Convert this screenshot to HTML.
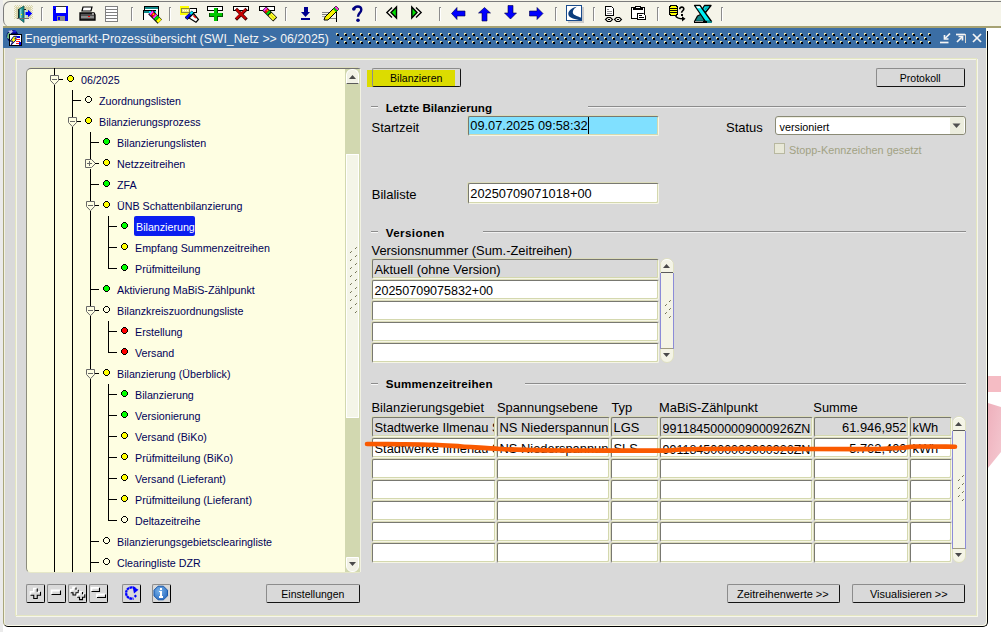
<!DOCTYPE html><html><head><meta charset="utf-8"><style>
html,body{margin:0;padding:0;}
body{width:1001px;height:632px;position:relative;overflow:hidden;background:#fff;font-family:"Liberation Sans", sans-serif;}
.t{position:absolute;white-space:nowrap;line-height:1;}
svg{position:absolute;overflow:visible;}
.fld{position:absolute;box-sizing:border-box;background:#fff;border-top:1px solid #787870;border-left:1px solid #787870;border-bottom:1px solid #f6f6e6;border-right:1px solid #f6f6e6;border-radius:2px;box-shadow:inset -1px -1px 0 #d4d8ae, -1px -1px 0 #dcdcbc;}
.btn{position:absolute;box-sizing:border-box;background:#d9d9d9;border-top:1px solid #8c8c8c;border-left:1px solid #8c8c8c;border-bottom:1px solid #141414;border-right:1px solid #141414;border-radius:2px;}
</style></head><body>
<div style="position:absolute;left:0px;top:0px;width:3px;height:632px;background:#ebebeb"></div>
<div style="position:absolute;left:3px;top:0px;width:998px;height:28px;background:#f5f4e9"></div>
<div style="position:absolute;left:3px;top:1px;width:1010px;height:26px;box-sizing:border-box;border:1px solid #7c7c7c;border-right:none;border-bottom:none;border-radius:7px 0 0 7px;background:#f5f4e9"></div>
<div style="position:absolute;left:3px;top:26px;width:998px;height:2px;background:#a6a273"></div>
<div style="position:absolute;left:41px;top:7px;width:1px;height:14px;background:#8c8c8c"></div>
<div style="position:absolute;left:42px;top:7px;width:1px;height:1px;background:#8c8c8c"></div>
<div style="position:absolute;left:42px;top:8px;width:1px;height:13px;background:#ffffff"></div>
<div style="position:absolute;left:131px;top:7px;width:1px;height:14px;background:#8c8c8c"></div>
<div style="position:absolute;left:132px;top:7px;width:1px;height:1px;background:#8c8c8c"></div>
<div style="position:absolute;left:132px;top:8px;width:1px;height:13px;background:#ffffff"></div>
<div style="position:absolute;left:169px;top:7px;width:1px;height:14px;background:#8c8c8c"></div>
<div style="position:absolute;left:170px;top:7px;width:1px;height:1px;background:#8c8c8c"></div>
<div style="position:absolute;left:170px;top:8px;width:1px;height:13px;background:#ffffff"></div>
<div style="position:absolute;left:285px;top:7px;width:1px;height:14px;background:#8c8c8c"></div>
<div style="position:absolute;left:286px;top:7px;width:1px;height:1px;background:#8c8c8c"></div>
<div style="position:absolute;left:286px;top:8px;width:1px;height:13px;background:#ffffff"></div>
<div style="position:absolute;left:375px;top:7px;width:1px;height:14px;background:#8c8c8c"></div>
<div style="position:absolute;left:376px;top:7px;width:1px;height:1px;background:#8c8c8c"></div>
<div style="position:absolute;left:376px;top:8px;width:1px;height:13px;background:#ffffff"></div>
<div style="position:absolute;left:439px;top:7px;width:1px;height:14px;background:#8c8c8c"></div>
<div style="position:absolute;left:440px;top:7px;width:1px;height:1px;background:#8c8c8c"></div>
<div style="position:absolute;left:440px;top:8px;width:1px;height:13px;background:#ffffff"></div>
<div style="position:absolute;left:555px;top:7px;width:1px;height:14px;background:#8c8c8c"></div>
<div style="position:absolute;left:556px;top:7px;width:1px;height:1px;background:#8c8c8c"></div>
<div style="position:absolute;left:556px;top:8px;width:1px;height:13px;background:#ffffff"></div>
<div style="position:absolute;left:593px;top:7px;width:1px;height:14px;background:#8c8c8c"></div>
<div style="position:absolute;left:594px;top:7px;width:1px;height:1px;background:#8c8c8c"></div>
<div style="position:absolute;left:594px;top:8px;width:1px;height:13px;background:#ffffff"></div>
<div style="position:absolute;left:657px;top:7px;width:1px;height:14px;background:#8c8c8c"></div>
<div style="position:absolute;left:658px;top:7px;width:1px;height:1px;background:#8c8c8c"></div>
<div style="position:absolute;left:658px;top:8px;width:1px;height:13px;background:#ffffff"></div>
<div style="position:absolute;left:721px;top:7px;width:1px;height:14px;background:#8c8c8c"></div>
<div style="position:absolute;left:722px;top:7px;width:1px;height:1px;background:#8c8c8c"></div>
<div style="position:absolute;left:722px;top:8px;width:1px;height:13px;background:#ffffff"></div>
<svg style="left:14px;top:5px;" width="20" height="19" viewBox="0 0 20 19" shape-rendering="crispEdges"><rect x="1" y="0" width="1" height="1" fill="#d9d5aa"/><rect x="3" y="0" width="1" height="1" fill="#d9d5aa"/><rect x="5" y="0" width="1" height="1" fill="#d9d5aa"/><rect x="7" y="0" width="1" height="1" fill="#d9d5aa"/><rect x="9" y="0" width="1" height="1" fill="#d9d5aa"/><rect x="11" y="0" width="1" height="1" fill="#d9d5aa"/><rect x="13" y="0" width="1" height="1" fill="#d9d5aa"/><rect x="15" y="0" width="1" height="1" fill="#d9d5aa"/><rect x="17" y="0" width="1" height="1" fill="#d9d5aa"/><rect x="0" y="1" width="1" height="1" fill="#d9d5aa"/><rect x="2" y="1" width="1" height="1" fill="#d9d5aa"/><rect x="4" y="1" width="1" height="1" fill="#d9d5aa"/><rect x="6" y="1" width="1" height="1" fill="#d9d5aa"/><rect x="8" y="1" width="1" height="1" fill="#d9d5aa"/><rect x="10" y="1" width="1" height="1" fill="#d9d5aa"/><rect x="12" y="1" width="1" height="1" fill="#d9d5aa"/><rect x="14" y="1" width="1" height="1" fill="#d9d5aa"/><rect x="16" y="1" width="1" height="1" fill="#d9d5aa"/><rect x="18" y="1" width="1" height="1" fill="#d9d5aa"/><rect x="1" y="2" width="1" height="1" fill="#d9d5aa"/><rect x="2" y="2" width="1" height="1" fill="#d9d5aa"/><rect x="3" y="2" width="1" height="1" fill="#d9d5aa"/><rect x="4" y="2" width="1" height="1" fill="#d9d5aa"/><rect x="5" y="2" width="1" height="1" fill="#d9d5aa"/><rect x="6" y="2" width="1" height="1" fill="#d9d5aa"/><rect x="7" y="2" width="1" height="1" fill="#d9d5aa"/><rect x="8" y="2" width="1" height="1" fill="#d9d5aa"/><rect x="9" y="2" width="1" height="1" fill="#d9d5aa"/><rect x="10" y="2" width="1" height="1" fill="#d9d5aa"/><rect x="11" y="2" width="1" height="1" fill="#d9d5aa"/><rect x="12" y="2" width="1" height="1" fill="#d9d5aa"/><rect x="13" y="2" width="1" height="1" fill="#d9d5aa"/><rect x="14" y="2" width="1" height="1" fill="#d9d5aa"/><rect x="15" y="2" width="1" height="1" fill="#d9d5aa"/><rect x="16" y="2" width="1" height="1" fill="#d9d5aa"/><rect x="17" y="2" width="1" height="1" fill="#d9d5aa"/><rect x="0" y="3" width="1" height="1" fill="#d9d5aa"/><rect x="2" y="3" width="1" height="1" fill="#d9d5aa"/><rect x="3" y="3" width="1" height="1" fill="#d9d5aa"/><rect x="4" y="3" width="1" height="1" fill="#d9d5aa"/><rect x="5" y="3" width="1" height="1" fill="#d9d5aa"/><rect x="6" y="3" width="1" height="1" fill="#d9d5aa"/><rect x="7" y="3" width="1" height="1" fill="#d9d5aa"/><rect x="8" y="3" width="1" height="1" fill="#d9d5aa"/><rect x="9" y="3" width="1" height="1" fill="#d9d5aa"/><rect x="10" y="3" width="1" height="1" fill="#d9d5aa"/><rect x="11" y="3" width="1" height="1" fill="#d9d5aa"/><rect x="12" y="3" width="1" height="1" fill="#d9d5aa"/><rect x="13" y="3" width="1" height="1" fill="#d9d5aa"/><rect x="14" y="3" width="1" height="1" fill="#d9d5aa"/><rect x="15" y="3" width="1" height="1" fill="#d9d5aa"/><rect x="16" y="3" width="1" height="1" fill="#d9d5aa"/><rect x="18" y="3" width="1" height="1" fill="#d9d5aa"/><rect x="1" y="4" width="1" height="1" fill="#d9d5aa"/><rect x="2" y="4" width="1" height="1" fill="#d9d5aa"/><rect x="3" y="4" width="1" height="1" fill="#d9d5aa"/><rect x="4" y="4" width="1" height="1" fill="#d9d5aa"/><rect x="5" y="4" width="1" height="1" fill="#d9d5aa"/><rect x="6" y="4" width="1" height="1" fill="#d9d5aa"/><rect x="7" y="4" width="1" height="1" fill="#d9d5aa"/><rect x="8" y="4" width="1" height="1" fill="#d9d5aa"/><rect x="9" y="4" width="1" height="1" fill="#d9d5aa"/><rect x="10" y="4" width="1" height="1" fill="#d9d5aa"/><rect x="11" y="4" width="1" height="1" fill="#d9d5aa"/><rect x="12" y="4" width="1" height="1" fill="#d9d5aa"/><rect x="13" y="4" width="1" height="1" fill="#d9d5aa"/><rect x="14" y="4" width="1" height="1" fill="#d9d5aa"/><rect x="15" y="4" width="1" height="1" fill="#d9d5aa"/><rect x="16" y="4" width="1" height="1" fill="#d9d5aa"/><rect x="17" y="4" width="1" height="1" fill="#d9d5aa"/><rect x="0" y="5" width="1" height="1" fill="#d9d5aa"/><rect x="2" y="5" width="1" height="1" fill="#d9d5aa"/><rect x="3" y="5" width="1" height="1" fill="#d9d5aa"/><rect x="4" y="5" width="1" height="1" fill="#d9d5aa"/><rect x="5" y="5" width="1" height="1" fill="#d9d5aa"/><rect x="6" y="5" width="1" height="1" fill="#d9d5aa"/><rect x="7" y="5" width="1" height="1" fill="#d9d5aa"/><rect x="8" y="5" width="1" height="1" fill="#d9d5aa"/><rect x="9" y="5" width="1" height="1" fill="#d9d5aa"/><rect x="10" y="5" width="1" height="1" fill="#d9d5aa"/><rect x="11" y="5" width="1" height="1" fill="#d9d5aa"/><rect x="12" y="5" width="1" height="1" fill="#d9d5aa"/><rect x="13" y="5" width="1" height="1" fill="#d9d5aa"/><rect x="14" y="5" width="1" height="1" fill="#d9d5aa"/><rect x="15" y="5" width="1" height="1" fill="#d9d5aa"/><rect x="16" y="5" width="1" height="1" fill="#d9d5aa"/><rect x="18" y="5" width="1" height="1" fill="#d9d5aa"/><rect x="1" y="6" width="1" height="1" fill="#d9d5aa"/><rect x="2" y="6" width="1" height="1" fill="#d9d5aa"/><rect x="3" y="6" width="1" height="1" fill="#d9d5aa"/><rect x="4" y="6" width="1" height="1" fill="#d9d5aa"/><rect x="5" y="6" width="1" height="1" fill="#d9d5aa"/><rect x="6" y="6" width="1" height="1" fill="#d9d5aa"/><rect x="7" y="6" width="1" height="1" fill="#d9d5aa"/><rect x="8" y="6" width="1" height="1" fill="#d9d5aa"/><rect x="9" y="6" width="1" height="1" fill="#d9d5aa"/><rect x="10" y="6" width="1" height="1" fill="#d9d5aa"/><rect x="11" y="6" width="1" height="1" fill="#d9d5aa"/><rect x="12" y="6" width="1" height="1" fill="#d9d5aa"/><rect x="13" y="6" width="1" height="1" fill="#d9d5aa"/><rect x="14" y="6" width="1" height="1" fill="#d9d5aa"/><rect x="15" y="6" width="1" height="1" fill="#d9d5aa"/><rect x="16" y="6" width="1" height="1" fill="#d9d5aa"/><rect x="17" y="6" width="1" height="1" fill="#d9d5aa"/><rect x="0" y="7" width="1" height="1" fill="#d9d5aa"/><rect x="2" y="7" width="1" height="1" fill="#d9d5aa"/><rect x="3" y="7" width="1" height="1" fill="#d9d5aa"/><rect x="4" y="7" width="1" height="1" fill="#d9d5aa"/><rect x="5" y="7" width="1" height="1" fill="#d9d5aa"/><rect x="6" y="7" width="1" height="1" fill="#d9d5aa"/><rect x="7" y="7" width="1" height="1" fill="#d9d5aa"/><rect x="8" y="7" width="1" height="1" fill="#d9d5aa"/><rect x="9" y="7" width="1" height="1" fill="#d9d5aa"/><rect x="10" y="7" width="1" height="1" fill="#d9d5aa"/><rect x="11" y="7" width="1" height="1" fill="#d9d5aa"/><rect x="12" y="7" width="1" height="1" fill="#d9d5aa"/><rect x="13" y="7" width="1" height="1" fill="#d9d5aa"/><rect x="14" y="7" width="1" height="1" fill="#d9d5aa"/><rect x="15" y="7" width="1" height="1" fill="#d9d5aa"/><rect x="16" y="7" width="1" height="1" fill="#d9d5aa"/><rect x="18" y="7" width="1" height="1" fill="#d9d5aa"/><rect x="1" y="8" width="1" height="1" fill="#d9d5aa"/><rect x="2" y="8" width="1" height="1" fill="#d9d5aa"/><rect x="3" y="8" width="1" height="1" fill="#d9d5aa"/><rect x="4" y="8" width="1" height="1" fill="#d9d5aa"/><rect x="5" y="8" width="1" height="1" fill="#d9d5aa"/><rect x="6" y="8" width="1" height="1" fill="#d9d5aa"/><rect x="7" y="8" width="1" height="1" fill="#d9d5aa"/><rect x="8" y="8" width="1" height="1" fill="#d9d5aa"/><rect x="9" y="8" width="1" height="1" fill="#d9d5aa"/><rect x="10" y="8" width="1" height="1" fill="#d9d5aa"/><rect x="11" y="8" width="1" height="1" fill="#d9d5aa"/><rect x="12" y="8" width="1" height="1" fill="#d9d5aa"/><rect x="13" y="8" width="1" height="1" fill="#d9d5aa"/><rect x="14" y="8" width="1" height="1" fill="#d9d5aa"/><rect x="15" y="8" width="1" height="1" fill="#d9d5aa"/><rect x="16" y="8" width="1" height="1" fill="#d9d5aa"/><rect x="17" y="8" width="1" height="1" fill="#d9d5aa"/><rect x="0" y="9" width="1" height="1" fill="#d9d5aa"/><rect x="2" y="9" width="1" height="1" fill="#d9d5aa"/><rect x="3" y="9" width="1" height="1" fill="#d9d5aa"/><rect x="4" y="9" width="1" height="1" fill="#d9d5aa"/><rect x="5" y="9" width="1" height="1" fill="#d9d5aa"/><rect x="6" y="9" width="1" height="1" fill="#d9d5aa"/><rect x="7" y="9" width="1" height="1" fill="#d9d5aa"/><rect x="8" y="9" width="1" height="1" fill="#d9d5aa"/><rect x="9" y="9" width="1" height="1" fill="#d9d5aa"/><rect x="10" y="9" width="1" height="1" fill="#d9d5aa"/><rect x="11" y="9" width="1" height="1" fill="#d9d5aa"/><rect x="12" y="9" width="1" height="1" fill="#d9d5aa"/><rect x="13" y="9" width="1" height="1" fill="#d9d5aa"/><rect x="14" y="9" width="1" height="1" fill="#d9d5aa"/><rect x="15" y="9" width="1" height="1" fill="#d9d5aa"/><rect x="16" y="9" width="1" height="1" fill="#d9d5aa"/><rect x="18" y="9" width="1" height="1" fill="#d9d5aa"/><rect x="1" y="10" width="1" height="1" fill="#d9d5aa"/><rect x="2" y="10" width="1" height="1" fill="#d9d5aa"/><rect x="3" y="10" width="1" height="1" fill="#d9d5aa"/><rect x="4" y="10" width="1" height="1" fill="#d9d5aa"/><rect x="5" y="10" width="1" height="1" fill="#d9d5aa"/><rect x="6" y="10" width="1" height="1" fill="#d9d5aa"/><rect x="7" y="10" width="1" height="1" fill="#d9d5aa"/><rect x="8" y="10" width="1" height="1" fill="#d9d5aa"/><rect x="9" y="10" width="1" height="1" fill="#d9d5aa"/><rect x="10" y="10" width="1" height="1" fill="#d9d5aa"/><rect x="11" y="10" width="1" height="1" fill="#d9d5aa"/><rect x="12" y="10" width="1" height="1" fill="#d9d5aa"/><rect x="13" y="10" width="1" height="1" fill="#d9d5aa"/><rect x="14" y="10" width="1" height="1" fill="#d9d5aa"/><rect x="15" y="10" width="1" height="1" fill="#d9d5aa"/><rect x="16" y="10" width="1" height="1" fill="#d9d5aa"/><rect x="17" y="10" width="1" height="1" fill="#d9d5aa"/><rect x="0" y="11" width="1" height="1" fill="#d9d5aa"/><rect x="2" y="11" width="1" height="1" fill="#d9d5aa"/><rect x="3" y="11" width="1" height="1" fill="#d9d5aa"/><rect x="4" y="11" width="1" height="1" fill="#d9d5aa"/><rect x="5" y="11" width="1" height="1" fill="#d9d5aa"/><rect x="6" y="11" width="1" height="1" fill="#d9d5aa"/><rect x="7" y="11" width="1" height="1" fill="#d9d5aa"/><rect x="8" y="11" width="1" height="1" fill="#d9d5aa"/><rect x="9" y="11" width="1" height="1" fill="#d9d5aa"/><rect x="10" y="11" width="1" height="1" fill="#d9d5aa"/><rect x="11" y="11" width="1" height="1" fill="#d9d5aa"/><rect x="12" y="11" width="1" height="1" fill="#d9d5aa"/><rect x="13" y="11" width="1" height="1" fill="#d9d5aa"/><rect x="14" y="11" width="1" height="1" fill="#d9d5aa"/><rect x="15" y="11" width="1" height="1" fill="#d9d5aa"/><rect x="16" y="11" width="1" height="1" fill="#d9d5aa"/><rect x="18" y="11" width="1" height="1" fill="#d9d5aa"/><rect x="1" y="12" width="1" height="1" fill="#d9d5aa"/><rect x="2" y="12" width="1" height="1" fill="#d9d5aa"/><rect x="3" y="12" width="1" height="1" fill="#d9d5aa"/><rect x="4" y="12" width="1" height="1" fill="#d9d5aa"/><rect x="5" y="12" width="1" height="1" fill="#d9d5aa"/><rect x="6" y="12" width="1" height="1" fill="#d9d5aa"/><rect x="7" y="12" width="1" height="1" fill="#d9d5aa"/><rect x="8" y="12" width="1" height="1" fill="#d9d5aa"/><rect x="9" y="12" width="1" height="1" fill="#d9d5aa"/><rect x="10" y="12" width="1" height="1" fill="#d9d5aa"/><rect x="11" y="12" width="1" height="1" fill="#d9d5aa"/><rect x="12" y="12" width="1" height="1" fill="#d9d5aa"/><rect x="13" y="12" width="1" height="1" fill="#d9d5aa"/><rect x="14" y="12" width="1" height="1" fill="#d9d5aa"/><rect x="15" y="12" width="1" height="1" fill="#d9d5aa"/><rect x="16" y="12" width="1" height="1" fill="#d9d5aa"/><rect x="17" y="12" width="1" height="1" fill="#d9d5aa"/><rect x="0" y="13" width="1" height="1" fill="#d9d5aa"/><rect x="2" y="13" width="1" height="1" fill="#d9d5aa"/><rect x="4" y="13" width="1" height="1" fill="#d9d5aa"/><rect x="6" y="13" width="1" height="1" fill="#d9d5aa"/><rect x="8" y="13" width="1" height="1" fill="#d9d5aa"/><rect x="10" y="13" width="1" height="1" fill="#d9d5aa"/><rect x="12" y="13" width="1" height="1" fill="#d9d5aa"/><rect x="14" y="13" width="1" height="1" fill="#d9d5aa"/><rect x="16" y="13" width="1" height="1" fill="#d9d5aa"/><rect x="18" y="13" width="1" height="1" fill="#d9d5aa"/><rect x="4" y="4" width="1.2" height="9.5" fill="#202020"/><rect x="4" y="4" width="8" height="1.2" fill="#202020"/><rect x="11" y="4" width="1.2" height="9.5" fill="#202020"/><rect x="10.5" y="5" width="1" height="8" fill="#a8f4f4"/><g shape-rendering="auto"><polygon points="5,4 10,1 10,17.5 5,13.5" fill="#189090" stroke="#0c4848" stroke-width="0.7"/><polygon points="6,4.5 7.5,3.5 7.5,14.5 6,13.2" fill="#88d0d0"/><polygon points="11.5,7 14,7 14,4.8 18.2,8.5 14,12.2 14,10 11.5,10" fill="#0000ff"/></g><rect x="7" y="9" width="1" height="1" fill="#ffff00"/><rect x="3" y="13" width="12" height="1" fill="#707070"/></svg>
<svg style="left:53px;top:6px;" width="16" height="16" viewBox="0 0 16 16" shape-rendering="crispEdges"><rect x="0" y="0" width="15" height="15" fill="#0000ff"/><rect x="3" y="1" width="10" height="5.5" fill="#fff"/>
<rect x="3" y="0" width="10" height="1" fill="#303030"/><rect x="4" y="10" width="8" height="5" fill="#8c8c8c"/><rect x="5" y="11" width="2" height="3" fill="#0000ff"/><rect x="1" y="3" width="1" height="1" fill="#000"/></svg>
<svg style="left:79px;top:6px;" width="17" height="16" viewBox="0 0 17 16" shape-rendering="crispEdges"><polygon points="4,1 13,1 12,5 3,5" fill="#fff" stroke="#000" stroke-width="1.2" shape-rendering="auto"/>
<rect x="5" y="2.5" width="6" height="0.8" fill="#808080"/>
<path d="M1 7 h14 l1 2 v5 h-15 v-5z" fill="#505050" stroke="#000" stroke-width="1.3" shape-rendering="auto"/>
<rect x="2" y="9.5" width="13" height="2" fill="#8c8c8c"/><rect x="9" y="9.5" width="2" height="1.2" fill="#ff0000"/><rect x="13" y="7" width="2" height="2" fill="#9a9a9a"/></svg>
<svg style="left:105px;top:6px;" width="14" height="16" viewBox="0 0 14 16" shape-rendering="crispEdges"><rect x="0.5" y="0.5" width="12" height="15" fill="#fff" stroke="#808080" stroke-width="1"/>
<rect x="1" y="3.3" width="12" height="1" fill="#808080"/><rect x="1" y="6.3" width="12" height="1" fill="#808080"/><rect x="1" y="9.3" width="12" height="1" fill="#808080"/><rect x="1" y="12.3" width="12" height="1" fill="#808080"/></svg>
<svg style="left:140px;top:3px;" width="24" height="24" viewBox="0 0 24 24" shape-rendering="crispEdges"><rect x="4" y="3" width="15" height="1" fill="#000"/><rect x="5" y="4" width="13" height="1.6" fill="#108888"/><rect x="4" y="3" width="1" height="5" fill="#000"/><rect x="18" y="4" width="1.2" height="9" fill="#000"/><rect x="5" y="5.6" width="13" height="2" fill="#fff"/><rect x="3" y="7" width="13" height="1" fill="#000"/><rect x="4" y="8" width="12" height="1.5" fill="#108888"/><rect x="3" y="7" width="1" height="10" fill="#000"/><rect x="4" y="9.5" width="12" height="7" fill="#fff"/><g transform="translate(10.3 9.2) rotate(45)" shape-rendering="auto"><rect x="0" y="-3" width="13.5" height="6" fill="#000"/><rect x="0.3" y="-2.6" width="2.2" height="4.6" fill="#ff30ff"/><rect x="2.5" y="-2.6" width="2.8" height="4.6" fill="#e00000"/><rect x="3" y="-1.5" width="1.5" height="1.5" fill="#ffd000"/><rect x="5.3" y="-2.6" width="1.8" height="4.6" fill="#ff30ff"/><rect x="7.1" y="-2.6" width="2.8" height="4.6" fill="#00e000"/><rect x="10.2" y="-2.6" width="3" height="4.6" fill="#ffff00"/></g><rect x="9" y="8" width="1.5" height="1.5" fill="#00e0ff"/><rect x="14.5" y="8" width="1.5" height="1.5" fill="#00e0ff"/></svg>
<svg style="left:177px;top:3px;" width="24" height="24" viewBox="0 0 24 24" shape-rendering="crispEdges"><polygon points="3,3 12,3 12,9 9,12 9,12 3,12" fill="#ffff00"/><rect x="4.5" y="5.5" width="15" height="4" fill="#fff" stroke="#000" stroke-width="1.1"/><rect x="4.5" y="5.5" width="8" height="4" fill="#f4f080" stroke="#8c8a40" stroke-width="1"/><rect x="6" y="7" width="1" height="1" fill="#fff"/><rect x="8" y="7" width="1" height="1" fill="#fff"/><rect x="10" y="7" width="1" height="1" fill="#fff"/><g shape-rendering="auto"><polygon points="8,14.5 14.8,8 17,10.3 10.5,16.5" fill="#0000ff" stroke="#000" stroke-width="0.8"/><polygon points="12.5,10.2 14.8,8 17,10.3 14.8,12.5" fill="#00e8f0"/><polygon points="12,15 16.5,10.5 21.5,16.5 19,19.2" fill="#fff" stroke="#000" stroke-width="1.2"/><line x1="16.3" y1="12.5" x2="18.8" y2="15.2" stroke="#ff0000" stroke-width="1.2"/></g></svg>
<svg style="left:207px;top:6px;" width="17" height="15" viewBox="0 0 17 15" shape-rendering="crispEdges"><rect x="0.5" y="0.5" width="15" height="4" fill="#fff" stroke="#000" stroke-width="1"/>
<path d="M7 2 h4 v5 h5 v3.5 h-5 v4.5 h-4 v-4.5 h-5 v-3.5 h5z" fill="#005000"/><path d="M6.5 2 h3 v5 h5 v3 h-5 v4.5 h-3 v-4.5 h-4 v-3 h4z" fill="#00c800"/></svg>
<svg style="left:233px;top:6px;" width="17" height="15" viewBox="0 0 17 15" shape-rendering="crispEdges"><rect x="0.5" y="0.5" width="15" height="4" fill="#fff" stroke="#000" stroke-width="1"/>
<g stroke="#3a0000" stroke-width="3.2" stroke-linecap="square" shape-rendering="auto"><line x1="4" y1="4" x2="12.5" y2="12.5"/><line x1="12.5" y1="4" x2="4" y2="12.5"/></g>
<g stroke="#c80000" stroke-width="2.2" stroke-linecap="square" shape-rendering="auto"><line x1="4" y1="4" x2="12" y2="12"/><line x1="12" y1="4" x2="4" y2="12"/></g></svg>
<svg style="left:259px;top:6px;" width="20" height="18" viewBox="0 0 20 18" shape-rendering="crispEdges"><rect x="0.5" y="0.5" width="15" height="4" fill="#fff" stroke="#000" stroke-width="1"/><g transform="translate(5.2 2.6) rotate(45)" shape-rendering="auto"><rect x="0" y="-2.8" width="15.5" height="5.6" fill="#000"/><rect x="0.4" y="-2.3" width="2" height="4.4" fill="#ff30ff"/><rect x="2.4" y="-2.3" width="2.4" height="4.4" fill="#ee1010"/><rect x="3" y="-1.5" width="1" height="1.2" fill="#ffd000"/><rect x="4.8" y="-2.3" width="2.2" height="4.4" fill="#00d800"/><rect x="8" y="-2.3" width="6.6" height="4.4" fill="#ffff30"/><rect x="8" y="-0.6" width="6.6" height="1" fill="#d8d800"/></g></svg>
<svg style="left:301px;top:7px;" width="9" height="13" viewBox="0 0 9 13" shape-rendering="crispEdges"><rect x="2.5" y="0" width="4" height="5" fill="#000090"/><polygon points="0,5 9,5 4.5,10" fill="#000090" shape-rendering="auto"/><rect x="0" y="11" width="9" height="1.5" fill="#000090"/></svg>
<svg style="left:322px;top:5px;" width="19" height="18" viewBox="0 0 19 18" shape-rendering="crispEdges"><rect x="0" y="7" width="9" height="1" fill="#808080"/><rect x="0" y="9" width="8" height="1" fill="#808080"/><rect x="0" y="11" width="7" height="1" fill="#a0a0a0"/><rect x="4" y="13" width="10" height="1" fill="#808080"/>
<rect x="14" y="7" width="1" height="10" fill="#000"/>
<polygon points="2,15 3,12 13,2 16,5 6,15" fill="#f4f000" stroke="#000" stroke-width="1" shape-rendering="auto"/>
<polygon points="12,3 14,1 17,4 15,6" fill="#ff30e0" stroke="#000" stroke-width="0.6" shape-rendering="auto"/><polygon points="11,4 12.5,2.5 15.5,5.5 14,7" fill="#00c000" shape-rendering="auto"/></svg>
<svg style="left:350px;top:4px;" width="14" height="20" viewBox="0 0 14 20" shape-rendering="crispEdges"><g shape-rendering="auto"><path d="M4 5.2 C 4.5 1.8, 11.5 1.2, 11.3 5.8 C 11.2 9, 8 9, 8 12.8" fill="none" stroke="#000080" stroke-width="2.4"/><circle cx="3.8" cy="5" r="1.8" fill="#000080"/><circle cx="8" cy="16.2" r="1.8" fill="#000080"/></g></svg>
<svg style="left:386px;top:7px;" width="12" height="12" viewBox="0 0 12 12" shape-rendering="crispEdges"><polyline points="6,0.5 0.8,5.5 6,10.5" fill="none" stroke="#000" stroke-width="1.3" shape-rendering="auto"/><polygon points="10.5,0 10.5,11 5,5.5" fill="#00e000" stroke="#000" stroke-width="1.4" shape-rendering="auto"/></svg>
<svg style="left:411px;top:7px;" width="12" height="12" viewBox="0 0 12 12" shape-rendering="crispEdges"><polyline points="5,0.5 10.2,5.5 5,10.5" fill="none" stroke="#000" stroke-width="1.3" shape-rendering="auto"/><polygon points="0.8,0 0.8,11 6,5.5" fill="#00e000" stroke="#000" stroke-width="1.4" shape-rendering="auto"/></svg>
<svg style="left:451px;top:7px;" width="15" height="14" viewBox="0 0 15 14" shape-rendering="crispEdges"><polygon points="0.5,6.5 6,0.5 6,4 14,4 14,9 6,9 6,12.5" fill="#0000ff" stroke="#000040" stroke-width="0.6" shape-rendering="auto"/></svg>
<svg style="left:478px;top:7px;" width="14" height="15" viewBox="0 0 14 15" shape-rendering="crispEdges"><polygon points="6.5,0.5 12.5,6 9,6 9,14 4,14 4,6 0.5,6" fill="#0000ff" stroke="#000040" stroke-width="0.6" shape-rendering="auto"/></svg>
<svg style="left:504px;top:5px;" width="14" height="15" viewBox="0 0 14 15" shape-rendering="crispEdges"><polygon points="6.5,14 12.5,8 9,8 9,0.5 4,0.5 4,8 0.5,8" fill="#0000ff" stroke="#000040" stroke-width="0.6" shape-rendering="auto"/></svg>
<svg style="left:529px;top:7px;" width="15" height="14" viewBox="0 0 15 14" shape-rendering="crispEdges"><polygon points="14,6.5 8,0.5 8,4 0.5,4 0.5,9 8,9 8,12.5" fill="#0000ff" stroke="#000040" stroke-width="0.6" shape-rendering="auto"/></svg>
<svg style="left:566px;top:5px;" width="18" height="18" viewBox="0 0 18 18" shape-rendering="crispEdges"><rect x="1.5" y="1.5" width="16" height="16" fill="#cacaca"/><rect x="0.5" y="0.5" width="15" height="15" fill="#fff" stroke="#1a4c8c" stroke-width="1.2"/><path d="M10.8 1.8 C 5 3, 1.5 6.5, 2.5 10 C 3.5 13.5, 9 13.8, 15.5 15.5 L 15.5 12.8 C 11 11, 6.5 10, 6.8 7 C 7 4.5, 9 3, 10.8 1.8 Z" fill="#0a3c7c" shape-rendering="auto"/></svg>
<svg style="left:604px;top:5px;" width="20" height="18" viewBox="0 0 20 18" shape-rendering="crispEdges"><path d="M1.5 1.5 H7.5 L9.5 3.5 V10.5 H1.5 Z" fill="#fff" stroke="#000" stroke-width="1" shape-rendering="auto"/><rect x="1" y="1" width="1" height="10" fill="#000"/><rect x="1" y="10" width="9" height="1" fill="#000"/><rect x="3" y="4" width="2" height="1" fill="#909090"/><rect x="3" y="6" width="5" height="1" fill="#909090"/><rect x="3" y="8" width="5" height="1" fill="#909090"/><g fill="none" stroke="#000" stroke-width="1.1" shape-rendering="auto"><path d="M1.5 14.5 L3.5 12.5 H6.5 L8.5 14.5 L6.5 16.5 H3.5z"/><path d="M10.5 14.5 L12.5 12.5 H15.5 L17.5 14.5 L15.5 16.5 H12.5z"/></g><rect x="4" y="14" width="2" height="1" fill="#000"/><rect x="13" y="14" width="2" height="1" fill="#000"/></svg>
<svg style="left:630px;top:5px;" width="17" height="16" viewBox="0 0 17 16" shape-rendering="crispEdges"><rect x="1" y="2" width="14" height="12" fill="#000"/><rect x="2" y="3" width="12" height="10" fill="#fff"/><rect x="5" y="1" width="6" height="1" fill="#000"/><rect x="4" y="2" width="1" height="1" fill="#000"/><rect x="11" y="2" width="1" height="1" fill="#000"/><rect x="3" y="3" width="10" height="2" fill="#000"/><rect x="6" y="2" width="4" height="1" fill="#fff"/><path d="M7.5 8.5 H13.5 L15.5 10.5 V14.5 H7.5 Z" fill="#fff" stroke="#000" stroke-width="1" shape-rendering="auto"/><rect x="7" y="8" width="1" height="7" fill="#000"/><rect x="7" y="14" width="9" height="1" fill="#000"/><rect x="9" y="10" width="3" height="1" fill="#000"/><rect x="9" y="12" width="5" height="1" fill="#000"/></svg>
<svg style="left:664px;top:2px;" width="50" height="24" viewBox="0 0 50 24" shape-rendering="crispEdges"><rect x="5" y="4" width="9" height="9" fill="#000"/><rect x="6" y="3" width="7" height="11" fill="#000"/><rect x="6" y="5" width="7" height="7" fill="#ffff00"/><rect x="7" y="4" width="5" height="9" fill="#ffff00"/><rect x="6" y="6" width="7" height="1" fill="#000"/><rect x="6" y="8" width="7" height="1" fill="#000"/><rect x="6" y="10" width="7" height="1" fill="#000"/><g shape-rendering="auto"><path d="M15.8 7.2 C 15.6 4.6, 20 4.4, 19.8 7 C 19.7 8.8, 17.6 8.8, 17.6 10.8" fill="none" stroke="#000" stroke-width="1.6"/><path d="M11.5 13.5 C 12.5 16, 14 16.8, 19 16.8" fill="none" stroke="#000" stroke-width="1.4"/><polygon points="18,14.2 21.5,16.8 18,19.4" fill="#000"/></g><rect x="16.5" y="12" width="2" height="2" fill="#000"/><g shape-rendering="auto" stroke-linejoin="round"><polygon points="30.5,19.5 33.5,14 37.5,12 41,19.5" fill="#108888" stroke="#000" stroke-width="1.3"/><polygon points="40.5,3.5 47,3.5 41.5,10.5 37.5,8.5" fill="#00e0e8" stroke="#000" stroke-width="1.3"/><polygon points="41.5,6 44,5 40.5,9" fill="#108888"/><polygon points="30.5,3.5 36,3.5 47.5,19.5 41.5,19.5" fill="#00f0f8" stroke="#000" stroke-width="1.3"/><polygon points="32,4.3 35.5,4.3 37,6.3 33.5,6.3" fill="#fff"/><polygon points="42,19 47.5,19 48,21 42,21" fill="#108888"/></g><rect x="30" y="19" width="13" height="2" fill="#000"/><rect x="31" y="19" width="8" height="1" fill="#909090"/></svg>
<svg style="left:988px;top:360px" width="13" height="120"><defs><linearGradient id="pg" x1="0" y1="0" x2="1" y2="1"><stop offset="0" stop-color="#eeb0bc"/><stop offset="1" stop-color="#f4c8d0"/></linearGradient></defs><rect x="0" y="16" width="13" height="16" fill="#f5bcc4"/><polygon points="0,43 13,47 13,92 0,108" fill="url(#pg)"/></svg>
<div style="position:absolute;left:3px;top:28px;width:985px;height:599px;box-sizing:border-box;background:#d9d9d9;border-left:1px solid #a8a67c;border-right:1px solid #000;border-bottom:1px solid #000;border-radius:0 0 5px 5px;box-shadow:inset -1px -1px 0 #fafae8, inset 1px 0 0 #f2f2e0"></div>
<div style="position:absolute;left:987px;top:28px;width:1px;height:3px;background:#fff"></div>
<div style="position:absolute;left:3px;top:28px;width:983px;height:20px;background:#3b6ea5"></div>
<svg style="left:3px;top:28px;" width="24" height="20" viewBox="0 0 24 20" shape-rendering="crispEdges"><g shape-rendering="auto"><circle cx="9.5" cy="8" r="6" fill="#000070"/><polygon points="4.5,6 7,3.5 8.5,4 6,11 4,10" fill="#70c080"/><polygon points="5,3 9,2 10,4 7.5,5.5" fill="#c8c0f0"/><rect x="10" y="2.5" width="3" height="2" fill="#2020e0"/></g><rect x="6.7" y="6.7" width="11.8" height="10.8" fill="#fff" stroke="#000" stroke-width="1.5"/><g shape-rendering="auto"><polygon points="10.8,8.3 14,8.3 11.8,11 14,11 8,17.2 9.8,13.2 7.2,13.2" fill="#ffff00" stroke="#000080" stroke-width="1"/></g><rect x="14" y="8" width="3.2" height="1.9" fill="#0000e0"/><rect x="13" y="11" width="4" height="1" fill="#ff2020"/><rect x="13" y="13.2" width="3.5" height="1" fill="#ff2020"/><rect x="12.5" y="15" width="3" height="1" fill="#ff2020"/><rect x="15.5" y="14.2" width="2.5" height="2.8" fill="#0000e0"/></svg>
<div class="t" style="left:24.6px;top:32.99px;font-size:12.3px;color:#f4f4f4;font-weight:400;">Energiemarkt-Prozessübersicht (SWI_Netz &gt;&gt; 06/2025)</div>
<svg style="left:336px;top:33px" width="595" height="12"><defs><pattern id="dp" x="0" y="0" width="8" height="8" patternUnits="userSpaceOnUse">
<rect x="0" y="0" width="2" height="2" fill="#e6e2b4"/><rect x="1" y="1" width="2" height="2" fill="#000"/>
<rect x="4" y="4" width="2" height="2" fill="#e6e2b4"/><rect x="5" y="5" width="2" height="2" fill="#000"/>
</pattern></defs><rect x="0" y="0" width="595" height="11" fill="url(#dp)"/></svg>
<svg style="left:925px;top:28px;" width="65" height="20" viewBox="0 0 65 20" shape-rendering="crispEdges"><g stroke="#f4f4f4" stroke-width="1.7" fill="none" shape-rendering="auto">
<line x1="15" y1="14.5" x2="23.5" y2="14.5"/><line x1="25" y1="5.5" x2="20" y2="10.5"/><polyline points="19.5,7 19.5,11 23.5,11"/>
<polyline points="31,6.5 40,6.5"/><line x1="32" y1="14" x2="37.5" y2="8.5"/><polyline points="33.5,8.5 37.5,8.5 37.5,12.5"/>
<line x1="48" y1="6" x2="56" y2="14"/><line x1="56" y1="6" x2="48" y2="14"/></g>
<line x1="40.5" y1="5.7" x2="40.5" y2="15" stroke="#dcd6cc" stroke-width="1.6"/></svg>
<div style="position:absolute;left:15px;top:58px;width:962px;height:558px;box-sizing:border-box;border:1px solid #e4e6c2;box-shadow:inset 1px 1px 0 #f6f6ea, 1px 1px 0 #f6f6ea;"></div>
<div style="position:absolute;left:26px;top:68px;width:335px;height:505px;box-sizing:border-box;background:#fefee2;border-top:1px solid #707070;border-left:1px solid #8c8c7c;border-bottom:1px solid #e6e8c8;border-radius:5px 3px 3px 5px;overflow:hidden"></div>
<div style="position:absolute;left:30px;top:67px;width:328px;height:1px;background:#dcdcbc"></div>
<div style="position:absolute;left:345px;top:69px;width:15px;height:503px;background:#d2d8b0"></div>
<div style="position:absolute;left:360px;top:69px;width:1px;height:503px;background:#f2f2e2"></div>
<div style="position:absolute;left:356px;top:68px;width:2px;height:1px;background:#707070"></div>
<div style="position:absolute;left:346px;top:69px;width:13px;height:15px;box-sizing:border-box;background:#f2f2e6;border:1px solid #fff;border-bottom:1px solid #5a5a5a;border-radius:6px 6px 0 0"></div>
<svg style="left:349px;top:75px;" width="8" height="5" viewBox="0 0 8 5" shape-rendering="crispEdges"><polygon points="0,4 3.5,0 7,4" fill="#4a4a4a" shape-rendering="auto"/></svg>
<div style="position:absolute;left:346px;top:154px;width:13px;height:264px;box-sizing:border-box;background:#f4f5e8;border:1px solid #fff;"></div>
<svg style="left:346px;top:242px;" width="13" height="80" viewBox="0 0 13 80" shape-rendering="crispEdges"><rect x="10" y="5" width="1" height="1" fill="#8c8c6c"/><rect x="9" y="6" width="1" height="1" fill="#6c6c50"/><rect x="10" y="13" width="1" height="1" fill="#8c8c6c"/><rect x="9" y="14" width="1" height="1" fill="#6c6c50"/><rect x="10" y="21" width="1" height="1" fill="#8c8c6c"/><rect x="9" y="22" width="1" height="1" fill="#6c6c50"/><rect x="10" y="29" width="1" height="1" fill="#8c8c6c"/><rect x="9" y="30" width="1" height="1" fill="#6c6c50"/><rect x="10" y="37" width="1" height="1" fill="#8c8c6c"/><rect x="9" y="38" width="1" height="1" fill="#6c6c50"/><rect x="10" y="45" width="1" height="1" fill="#8c8c6c"/><rect x="9" y="46" width="1" height="1" fill="#6c6c50"/><rect x="10" y="53" width="1" height="1" fill="#8c8c6c"/><rect x="9" y="54" width="1" height="1" fill="#6c6c50"/><rect x="10" y="61" width="1" height="1" fill="#8c8c6c"/><rect x="9" y="62" width="1" height="1" fill="#6c6c50"/><rect x="10" y="69" width="1" height="1" fill="#8c8c6c"/><rect x="9" y="70" width="1" height="1" fill="#6c6c50"/><rect x="5" y="9" width="1" height="1" fill="#8c8c6c"/><rect x="4" y="10" width="1" height="1" fill="#6c6c50"/><rect x="5" y="17" width="1" height="1" fill="#8c8c6c"/><rect x="4" y="18" width="1" height="1" fill="#6c6c50"/><rect x="5" y="25" width="1" height="1" fill="#8c8c6c"/><rect x="4" y="26" width="1" height="1" fill="#6c6c50"/><rect x="5" y="33" width="1" height="1" fill="#8c8c6c"/><rect x="4" y="34" width="1" height="1" fill="#6c6c50"/><rect x="5" y="41" width="1" height="1" fill="#8c8c6c"/><rect x="4" y="42" width="1" height="1" fill="#6c6c50"/><rect x="5" y="49" width="1" height="1" fill="#8c8c6c"/><rect x="4" y="50" width="1" height="1" fill="#6c6c50"/><rect x="5" y="57" width="1" height="1" fill="#8c8c6c"/><rect x="4" y="58" width="1" height="1" fill="#6c6c50"/><rect x="5" y="65" width="1" height="1" fill="#8c8c6c"/><rect x="4" y="66" width="1" height="1" fill="#6c6c50"/></svg>
<div style="position:absolute;left:346px;top:557px;width:13px;height:15px;box-sizing:border-box;background:#f2f2e6;border:1px solid #fff;border-radius:0 0 6px 6px"></div>
<svg style="left:349px;top:562px;" width="8" height="5" viewBox="0 0 8 5" shape-rendering="crispEdges"><polygon points="0,0 3.5,4 7,0" fill="#4a4a4a" shape-rendering="auto"/></svg>
<svg style="left:0px;top:0px;" width="400" height="632" viewBox="0 0 400 632" shape-rendering="crispEdges"><rect x="54" y="68" width="1" height="8" fill="#000"/><rect x="54" y="85" width="1" height="487" fill="#000"/><rect x="72" y="90" width="1" height="482" fill="#000"/><rect x="90" y="132" width="1" height="440" fill="#000"/><rect x="108" y="216" width="1" height="53" fill="#000"/><rect x="108" y="321" width="1" height="32" fill="#000"/><rect x="108" y="384" width="1" height="137" fill="#000"/><rect x="54" y="75" width="1" height="10" fill="#fefee2"/><path d="M50.5 75.5 H58.5 V80.5 L54.5 84.7 L50.5 80.5 Z" fill="#fefee2" stroke="#686868" stroke-width="1" shape-rendering="auto"/><rect x="52" y="79" width="5" height="1" fill="#686868"/><rect x="59" y="79" width="4" height="1" fill="#000"/><path d="M69 75h3v1h1v1h1v3h-1v1h-1v1h-3v-1h-1v-1h-1v-3h1v-1h1z" fill="#000"/><path d="M69 76h3v1h1v3h-1v1h-3v-1h-1v-3h1z" fill="#ffff00"/><rect x="72" y="100" width="9" height="1" fill="#000"/><path d="M87 96h3v1h1v1h1v3h-1v1h-1v1h-3v-1h-1v-1h-1v-3h1v-1h1z" fill="#000"/><path d="M87 97h3v1h1v3h-1v1h-3v-1h-1v-3h1z" fill="#fefee2"/><rect x="72" y="117" width="1" height="10" fill="#fefee2"/><path d="M68.5 117.5 H76.5 V122.5 L72.5 126.7 L68.5 122.5 Z" fill="#fefee2" stroke="#686868" stroke-width="1" shape-rendering="auto"/><rect x="70" y="121" width="5" height="1" fill="#686868"/><rect x="77" y="121" width="4" height="1" fill="#000"/><path d="M87 117h3v1h1v1h1v3h-1v1h-1v1h-3v-1h-1v-1h-1v-3h1v-1h1z" fill="#000"/><path d="M87 118h3v1h1v3h-1v1h-3v-1h-1v-3h1z" fill="#ffff00"/><rect x="90" y="142" width="9" height="1" fill="#000"/><path d="M105 138h3v1h1v1h1v3h-1v1h-1v1h-3v-1h-1v-1h-1v-3h1v-1h1z" fill="#000"/><path d="M105 139h3v1h1v3h-1v1h-3v-1h-1v-3h1z" fill="#00ff00"/><rect x="90" y="159" width="1" height="10" fill="#fefee2"/><path d="M85.5 159.5 H91.5 L95.5 163.5 L91.5 167.5 H85.5 Z" fill="#fefee2" stroke="#686868" stroke-width="1" shape-rendering="auto"/><rect x="87" y="163" width="5" height="1" fill="#686868"/><rect x="89" y="161" width="1" height="5" fill="#686868"/><rect x="95" y="163" width="4" height="1" fill="#000"/><path d="M105 159h3v1h1v1h1v3h-1v1h-1v1h-3v-1h-1v-1h-1v-3h1v-1h1z" fill="#000"/><path d="M105 160h3v1h1v3h-1v1h-3v-1h-1v-3h1z" fill="#ffff00"/><rect x="90" y="184" width="9" height="1" fill="#000"/><path d="M105 180h3v1h1v1h1v3h-1v1h-1v1h-3v-1h-1v-1h-1v-3h1v-1h1z" fill="#000"/><path d="M105 181h3v1h1v3h-1v1h-3v-1h-1v-3h1z" fill="#00ff00"/><rect x="90" y="201" width="1" height="10" fill="#fefee2"/><path d="M86.5 201.5 H94.5 V206.5 L90.5 210.7 L86.5 206.5 Z" fill="#fefee2" stroke="#686868" stroke-width="1" shape-rendering="auto"/><rect x="88" y="205" width="5" height="1" fill="#686868"/><rect x="95" y="205" width="4" height="1" fill="#000"/><path d="M105 201h3v1h1v1h1v3h-1v1h-1v1h-3v-1h-1v-1h-1v-3h1v-1h1z" fill="#000"/><path d="M105 202h3v1h1v3h-1v1h-3v-1h-1v-3h1z" fill="#ffff00"/><rect x="108" y="226" width="9" height="1" fill="#000"/><path d="M123 222h3v1h1v1h1v3h-1v1h-1v1h-3v-1h-1v-1h-1v-3h1v-1h1z" fill="#000"/><path d="M123 223h3v1h1v3h-1v1h-3v-1h-1v-3h1z" fill="#00ff00"/><rect x="108" y="247" width="9" height="1" fill="#000"/><path d="M123 243h3v1h1v1h1v3h-1v1h-1v1h-3v-1h-1v-1h-1v-3h1v-1h1z" fill="#000"/><path d="M123 244h3v1h1v3h-1v1h-3v-1h-1v-3h1z" fill="#ffff00"/><rect x="108" y="268" width="9" height="1" fill="#000"/><path d="M123 264h3v1h1v1h1v3h-1v1h-1v1h-3v-1h-1v-1h-1v-3h1v-1h1z" fill="#000"/><path d="M123 265h3v1h1v3h-1v1h-3v-1h-1v-3h1z" fill="#00ff00"/><rect x="90" y="289" width="9" height="1" fill="#000"/><path d="M105 285h3v1h1v1h1v3h-1v1h-1v1h-3v-1h-1v-1h-1v-3h1v-1h1z" fill="#000"/><path d="M105 286h3v1h1v3h-1v1h-3v-1h-1v-3h1z" fill="#00ff00"/><rect x="90" y="306" width="1" height="10" fill="#fefee2"/><path d="M86.5 306.5 H94.5 V311.5 L90.5 315.7 L86.5 311.5 Z" fill="#fefee2" stroke="#686868" stroke-width="1" shape-rendering="auto"/><rect x="88" y="310" width="5" height="1" fill="#686868"/><rect x="95" y="310" width="4" height="1" fill="#000"/><path d="M105 306h3v1h1v1h1v3h-1v1h-1v1h-3v-1h-1v-1h-1v-3h1v-1h1z" fill="#000"/><path d="M105 307h3v1h1v3h-1v1h-3v-1h-1v-3h1z" fill="#fefee2"/><rect x="108" y="331" width="9" height="1" fill="#000"/><path d="M123 327h3v1h1v1h1v3h-1v1h-1v1h-3v-1h-1v-1h-1v-3h1v-1h1z" fill="#000"/><path d="M123 328h3v1h1v3h-1v1h-3v-1h-1v-3h1z" fill="#ff0000"/><rect x="108" y="352" width="9" height="1" fill="#000"/><path d="M123 348h3v1h1v1h1v3h-1v1h-1v1h-3v-1h-1v-1h-1v-3h1v-1h1z" fill="#000"/><path d="M123 349h3v1h1v3h-1v1h-3v-1h-1v-3h1z" fill="#ff0000"/><rect x="90" y="369" width="1" height="10" fill="#fefee2"/><path d="M86.5 369.5 H94.5 V374.5 L90.5 378.7 L86.5 374.5 Z" fill="#fefee2" stroke="#686868" stroke-width="1" shape-rendering="auto"/><rect x="88" y="373" width="5" height="1" fill="#686868"/><rect x="95" y="373" width="4" height="1" fill="#000"/><path d="M105 369h3v1h1v1h1v3h-1v1h-1v1h-3v-1h-1v-1h-1v-3h1v-1h1z" fill="#000"/><path d="M105 370h3v1h1v3h-1v1h-3v-1h-1v-3h1z" fill="#ffff00"/><rect x="108" y="394" width="9" height="1" fill="#000"/><path d="M123 390h3v1h1v1h1v3h-1v1h-1v1h-3v-1h-1v-1h-1v-3h1v-1h1z" fill="#000"/><path d="M123 391h3v1h1v3h-1v1h-3v-1h-1v-3h1z" fill="#00ff00"/><rect x="108" y="415" width="9" height="1" fill="#000"/><path d="M123 411h3v1h1v1h1v3h-1v1h-1v1h-3v-1h-1v-1h-1v-3h1v-1h1z" fill="#000"/><path d="M123 412h3v1h1v3h-1v1h-3v-1h-1v-3h1z" fill="#00ff00"/><rect x="108" y="436" width="9" height="1" fill="#000"/><path d="M123 432h3v1h1v1h1v3h-1v1h-1v1h-3v-1h-1v-1h-1v-3h1v-1h1z" fill="#000"/><path d="M123 433h3v1h1v3h-1v1h-3v-1h-1v-3h1z" fill="#ffff00"/><rect x="108" y="457" width="9" height="1" fill="#000"/><path d="M123 453h3v1h1v1h1v3h-1v1h-1v1h-3v-1h-1v-1h-1v-3h1v-1h1z" fill="#000"/><path d="M123 454h3v1h1v3h-1v1h-3v-1h-1v-3h1z" fill="#ffff00"/><rect x="108" y="478" width="9" height="1" fill="#000"/><path d="M123 474h3v1h1v1h1v3h-1v1h-1v1h-3v-1h-1v-1h-1v-3h1v-1h1z" fill="#000"/><path d="M123 475h3v1h1v3h-1v1h-3v-1h-1v-3h1z" fill="#ffff00"/><rect x="108" y="499" width="9" height="1" fill="#000"/><path d="M123 495h3v1h1v1h1v3h-1v1h-1v1h-3v-1h-1v-1h-1v-3h1v-1h1z" fill="#000"/><path d="M123 496h3v1h1v3h-1v1h-3v-1h-1v-3h1z" fill="#ffff00"/><rect x="108" y="520" width="9" height="1" fill="#000"/><path d="M123 516h3v1h1v1h1v3h-1v1h-1v1h-3v-1h-1v-1h-1v-3h1v-1h1z" fill="#000"/><path d="M123 517h3v1h1v3h-1v1h-3v-1h-1v-3h1z" fill="#fefee2"/><rect x="90" y="541" width="9" height="1" fill="#000"/><path d="M105 537h3v1h1v1h1v3h-1v1h-1v1h-3v-1h-1v-1h-1v-3h1v-1h1z" fill="#000"/><path d="M105 538h3v1h1v3h-1v1h-3v-1h-1v-3h1z" fill="#fefee2"/><rect x="90" y="562" width="9" height="1" fill="#000"/><path d="M105 558h3v1h1v1h1v3h-1v1h-1v1h-3v-1h-1v-1h-1v-3h1v-1h1z" fill="#000"/><path d="M105 559h3v1h1v3h-1v1h-3v-1h-1v-3h1z" fill="#fefee2"/></svg>
<div class="t" style="left:81px;top:75.14px;font-size:10.7px;color:#000058;font-weight:400;">06/2025</div>
<div class="t" style="left:99px;top:96.14px;font-size:10.7px;color:#000058;font-weight:400;">Zuordnungslisten</div>
<div class="t" style="left:99px;top:117.14px;font-size:10.7px;color:#000058;font-weight:400;">Bilanzierungsprozess</div>
<div class="t" style="left:117px;top:138.14px;font-size:10.7px;color:#000058;font-weight:400;">Bilanzierungslisten</div>
<div class="t" style="left:117px;top:159.14px;font-size:10.7px;color:#000058;font-weight:400;">Netzzeitreihen</div>
<div class="t" style="left:117px;top:180.14px;font-size:10.7px;color:#000058;font-weight:400;">ZFA</div>
<div class="t" style="left:117px;top:201.14px;font-size:10.7px;color:#000058;font-weight:400;">ÜNB Schattenbilanzierung</div>
<div style="position:absolute;left:134px;top:216px;width:61px;height:20px;background:#0b1ef0;border-radius:2px"></div>
<div class="t" style="left:136px;top:222.14px;font-size:10.7px;color:#fff;font-weight:400;">Bilanzierung</div>
<div class="t" style="left:135px;top:243.14px;font-size:10.7px;color:#000058;font-weight:400;">Empfang Summenzeitreihen</div>
<div class="t" style="left:135px;top:264.14px;font-size:10.7px;color:#000058;font-weight:400;">Prüfmitteilung</div>
<div class="t" style="left:117px;top:285.14px;font-size:10.7px;color:#000058;font-weight:400;">Aktivierung MaBiS-Zählpunkt</div>
<div class="t" style="left:117px;top:306.14px;font-size:10.7px;color:#000058;font-weight:400;">Bilanzkreiszuordnungsliste</div>
<div class="t" style="left:135px;top:327.14px;font-size:10.7px;color:#000058;font-weight:400;">Erstellung</div>
<div class="t" style="left:135px;top:348.14px;font-size:10.7px;color:#000058;font-weight:400;">Versand</div>
<div class="t" style="left:117px;top:369.14px;font-size:10.7px;color:#000058;font-weight:400;">Bilanzierung (Überblick)</div>
<div class="t" style="left:135px;top:390.14px;font-size:10.7px;color:#000058;font-weight:400;">Bilanzierung</div>
<div class="t" style="left:135px;top:411.14px;font-size:10.7px;color:#000058;font-weight:400;">Versionierung</div>
<div class="t" style="left:135px;top:432.14px;font-size:10.7px;color:#000058;font-weight:400;">Versand (BiKo)</div>
<div class="t" style="left:135px;top:453.14px;font-size:10.7px;color:#000058;font-weight:400;">Prüfmitteilung (BiKo)</div>
<div class="t" style="left:135px;top:474.14px;font-size:10.7px;color:#000058;font-weight:400;">Versand (Lieferant)</div>
<div class="t" style="left:135px;top:495.14px;font-size:10.7px;color:#000058;font-weight:400;">Prüfmitteilung (Lieferant)</div>
<div class="t" style="left:135px;top:516.14px;font-size:10.7px;color:#000058;font-weight:400;">Deltazeitreihe</div>
<div class="t" style="left:117px;top:537.14px;font-size:10.7px;color:#000058;font-weight:400;">Bilanzierungsgebietsclearingliste</div>
<div class="t" style="left:117px;top:558.14px;font-size:10.7px;color:#000058;font-weight:400;">Clearingliste DZR</div>
<div class="btn" style="left:26px;top:584px;width:19px;height:19px;border-color:#8c8c8c #000 #000 #8c8c8c;border-width:1px 1.5px 1.5px 1px"></div>
<div class="btn" style="left:47px;top:584px;width:19px;height:19px;border-color:#8c8c8c #000 #000 #8c8c8c;border-width:1px 1.5px 1.5px 1px"></div>
<div class="btn" style="left:68px;top:584px;width:19px;height:19px;border-color:#8c8c8c #000 #000 #8c8c8c;border-width:1px 1.5px 1.5px 1px"></div>
<div class="btn" style="left:89px;top:584px;width:19px;height:19px;border-color:#8c8c8c #000 #000 #8c8c8c;border-width:1px 1.5px 1.5px 1px"></div>
<div class="btn" style="left:122px;top:584px;width:19px;height:19px;border-color:#8c8c8c #000 #000 #8c8c8c;border-width:1px 1.5px 1.5px 1px"></div>
<div class="btn" style="left:152px;top:584px;width:19px;height:19px;border-color:#8c8c8c #000 #000 #8c8c8c;border-width:1px 1.5px 1.5px 1px"></div>
<svg style="left:26px;top:584px;" width="19" height="19" viewBox="0 0 19 19" shape-rendering="crispEdges"><g shape-rendering="auto"><polyline points="4.5,11.25 4.5,7.75 7.75,7.75 7.75,4.5 11.25,4.5" fill="none" stroke="#fff" stroke-width="1.6"/><polyline points="11.25,7.75 14.5,7.75" fill="none" stroke="#fff" stroke-width="1.6"/><polyline points="11.25,4.5 11.25,7.75" fill="none" stroke="#000" stroke-width="1.1"/><polyline points="14.5,7.75 14.5,11.25 11.25,11.25 11.25,14.5 7.75,14.5 7.75,11.25 4.5,11.25" fill="none" stroke="#000" stroke-width="1.1"/></g></svg>
<svg style="left:47px;top:584px;" width="19" height="19" viewBox="0 0 19 19" shape-rendering="crispEdges"><g shape-rendering="auto"><polyline points="4.5,10.5 4.5,6.5 13.5,6.5" fill="none" stroke="#fff" stroke-width="1.8"/><polyline points="13.5,6.5 13.5,10.5 4.5,10.5" fill="none" stroke="#000" stroke-width="1.1"/></g></svg>
<svg style="left:68px;top:584px;" width="19" height="19" viewBox="0 0 19 19" shape-rendering="crispEdges"><g shape-rendering="auto"><polyline points="2.7,8.7 2.7,5.7 5.0,5.7 5.0,3.4000000000000004 8.0,3.4000000000000004" fill="none" stroke="#fff" stroke-width="1.6"/><polyline points="8.0,5.7 10.3,5.7" fill="none" stroke="#fff" stroke-width="1.6"/><polyline points="8.0,3.4000000000000004 8.0,5.7" fill="none" stroke="#000" stroke-width="1.1"/><polyline points="10.3,5.7 10.3,8.7 8.0,8.7 8.0,11.0 5.0,11.0 5.0,8.7 2.7,8.7" fill="none" stroke="#000" stroke-width="1.1"/></g><g shape-rendering="auto"><polyline points="9.2,13.3 9.2,10.3 11.5,10.3 11.5,8.0 14.5,8.0" fill="none" stroke="#fff" stroke-width="1.6"/><polyline points="14.5,10.3 16.8,10.3" fill="none" stroke="#fff" stroke-width="1.6"/><polyline points="14.5,8.0 14.5,10.3" fill="none" stroke="#000" stroke-width="1.1"/><polyline points="16.8,10.3 16.8,13.3 14.5,13.3 14.5,15.600000000000001 11.5,15.600000000000001 11.5,13.3 9.2,13.3" fill="none" stroke="#000" stroke-width="1.1"/></g></svg>
<svg style="left:89px;top:584px;" width="19" height="19" viewBox="0 0 19 19" shape-rendering="crispEdges"><g shape-rendering="auto"><polyline points="2.5,7.5 2.5,3.8 10.5,3.8" fill="none" stroke="#fff" stroke-width="1.8"/><polyline points="10.5,3.8 10.5,7.5 2.5,7.5" fill="none" stroke="#000" stroke-width="1.1"/></g><g shape-rendering="auto"><polyline points="8,13.5 8,10.5 16.5,10.5" fill="none" stroke="#fff" stroke-width="1.8"/><polyline points="16.5,10.5 16.5,13.5 8,13.5" fill="none" stroke="#000" stroke-width="1.1"/></g></svg>
<svg style="left:122px;top:584px;" width="19" height="19" viewBox="0 0 19 19" shape-rendering="crispEdges"><g shape-rendering="auto"><path d="M13 4.5 A5.6 5.6 0 1 0 11.5 14.3" fill="none" stroke="#0000ff" stroke-width="2.3" stroke-dasharray="2.6 0.5"/><polygon points="10.5,2.3 16.5,5.8 12,9.5" fill="#0000ff"/><rect x="12.3" y="11" width="2.2" height="2.2" fill="#0000ff" transform="rotate(45 13.4 12.1)"/></g></svg>
<svg style="left:152px;top:584px;" width="19" height="19" viewBox="0 0 19 19" shape-rendering="crispEdges"><defs><radialGradient id="ig" cx="0.4" cy="0.35" r="0.7"><stop offset="0" stop-color="#7ab4ec"/><stop offset="1" stop-color="#2a6cc0"/></radialGradient></defs><polygon points="6,2.2 11.5,2.2 15.5,6.2 15.5,11.8 11.5,15.8 6,15.8 2,11.8 2,6.2" fill="url(#ig)" stroke="#1a58a8" stroke-width="1" shape-rendering="auto"/><rect x="8" y="4.2" width="2" height="2" fill="#fff"/><rect x="8" y="7.2" width="2" height="5.8" fill="#fff"/><rect x="6.8" y="12.2" width="4.4" height="1.3" fill="#fff"/><rect x="7" y="7.2" width="1.2" height="1" fill="#fff"/></svg>
<div class="btn" style="left:266px;top:584px;width:94px;height:19px"></div>
<div class="t" style="left:281.3px;top:589.11px;font-size:10.5px;color:#000;font-weight:400;">Einstellungen</div>
<div style="position:absolute;left:367px;top:70px;width:88px;height:17px;background:#dcdc00"></div>
<div class="btn" style="left:372px;top:68px;width:89px;height:19px;background:transparent"></div>
<div class="t" style="left:390px;top:72.53px;font-size:10.6px;color:#000;font-weight:400;">Bilanzieren</div>
<div class="btn" style="left:876px;top:68px;width:89px;height:19px"></div>
<div class="t" style="left:899.8px;top:72.61px;font-size:10.5px;color:#000;font-weight:400;">Protokoll</div>
<div style="position:absolute;left:371px;top:106px;width:7px;height:1px;background:#8c8c8c"></div>
<div style="position:absolute;left:371px;top:107px;width:7px;height:1px;background:#f8f8f8"></div>
<div class="t" style="left:385.7px;top:101.98px;font-size:11.6px;color:#000;font-weight:700;letter-spacing:0px">Letzte Bilanzierung</div>
<div style="position:absolute;left:588px;top:106px;width:378px;height:1px;background:#8c8c8c"></div>
<div style="position:absolute;left:588px;top:107px;width:378px;height:1px;background:#f0f0f0"></div>
<div class="t" style="left:371.5px;top:120.50px;font-size:13px;color:#000;font-weight:400;">Startzeit</div>
<div class="fld" style="left:468px;top:116px;width:191px;height:20px;background:#80e0ff"></div>
<div class="t" style="left:470.3px;top:120.16px;font-size:12.8px;color:#000;font-weight:400;">09.07.2025 09:58:32</div>
<div style="position:absolute;left:588px;top:117px;width:1px;height:17px;background:#000"></div>
<div class="t" style="left:371.8px;top:188.00px;font-size:13px;color:#000;font-weight:400;">Bilaliste</div>
<div class="fld" style="left:468px;top:183px;width:191px;height:21px"></div>
<div class="t" style="left:470.3px;top:188.16px;font-size:12.8px;color:#000;font-weight:400;">20250709071018+00</div>
<div class="t" style="left:726px;top:120.50px;font-size:13px;color:#000;font-weight:400;">Status</div>
<div style="position:absolute;left:775px;top:116px;width:191px;height:19px;box-sizing:border-box;background:#fff;border:1px solid #8a8a76;border-radius:3px;box-shadow:inset 0 1px 0 #f0f0e0"></div>
<div style="position:absolute;left:950px;top:117px;width:14px;height:17px;background:#ecedde"></div>
<svg style="left:952px;top:123px;" width="10" height="6" viewBox="0 0 10 6" shape-rendering="crispEdges"><polygon points="0.5,0.5 8.5,0.5 4.5,5" fill="#505050" shape-rendering="auto"/></svg>
<div class="t" style="left:779.5px;top:121.86px;font-size:10.8px;color:#000;font-weight:400;">versioniert</div>
<div style="position:absolute;left:774px;top:143px;width:11px;height:11px;box-sizing:border-box;border:1px solid #b8b8a0;background:#e8e8d8"></div>
<div class="t" style="left:789px;top:145.22px;font-size:10.85px;color:#a2a284;font-weight:400;">Stopp-Kennzeichen gesetzt</div>
<div style="position:absolute;left:371px;top:231px;width:7px;height:1px;background:#8c8c8c"></div>
<div style="position:absolute;left:371px;top:232px;width:7px;height:1px;background:#f8f8f8"></div>
<div class="t" style="left:385.7px;top:226.88px;font-size:11.6px;color:#000;font-weight:700;letter-spacing:0.4px">Versionen</div>
<div style="position:absolute;left:483px;top:231px;width:483px;height:1px;background:#8c8c8c"></div>
<div style="position:absolute;left:483px;top:232px;width:483px;height:1px;background:#f0f0f0"></div>
<div class="t" style="left:371.5px;top:244.88px;font-size:12.9px;color:#000;font-weight:400;">Versionsnummer (Sum.-Zeitreihen)</div>
<div class="fld" style="left:372px;top:259px;width:287px;height:20px;background:#d9d9d9"></div>
<div class="fld" style="left:372px;top:280px;width:287px;height:20px;background:#fff"></div>
<div class="fld" style="left:372px;top:301px;width:287px;height:20px;background:#fff"></div>
<div class="fld" style="left:372px;top:322px;width:287px;height:20px;background:#fff"></div>
<div class="fld" style="left:372px;top:343px;width:287px;height:20px;background:#fff"></div>
<div class="t" style="left:374.5px;top:263.58px;font-size:12.9px;color:#000;font-weight:400;">Aktuell (ohne Version)</div>
<div class="t" style="left:374.5px;top:284.92px;font-size:12.5px;color:#000;font-weight:400;">20250709075832+00</div>
<div style="position:absolute;left:660px;top:258px;width:14px;height:105px;box-sizing:border-box;background:#f4f4e6;border:1px solid #dfe0c0;border-radius:7px"></div>
<div style="position:absolute;left:661px;top:259px;width:12px;height:6px;border-top:1px solid #fff;border-radius:6px 6px 0 0;box-sizing:border-box"></div>
<div style="position:absolute;left:660px;top:273px;width:1px;height:76px;background:#8c8cd8"></div>
<div style="position:absolute;left:673px;top:273px;width:1px;height:76px;background:#8c8cd8"></div>
<div style="position:absolute;left:661px;top:272px;width:12px;height:1px;background:#5a5a5a"></div>
<div style="position:absolute;left:661px;top:348px;width:12px;height:1px;background:#a09c80"></div>
<svg style="left:663px;top:264px;" width="8" height="5" viewBox="0 0 8 5" shape-rendering="crispEdges"><polygon points="0,4 3.5,0 7,4" fill="#4a4a4a" shape-rendering="auto"/></svg>
<svg style="left:663px;top:353px;" width="8" height="5" viewBox="0 0 8 5" shape-rendering="crispEdges"><polygon points="0,0 3.5,4 7,0" fill="#4a4a4a" shape-rendering="auto"/></svg>
<svg style="left:660px;top:258px;" width="14" height="105" viewBox="0 0 14 105" shape-rendering="crispEdges"><rect x="10" y="42" width="1" height="1" fill="#8c8c6c"/><rect x="9" y="43" width="1" height="1" fill="#6c6c50"/><rect x="10" y="50" width="1" height="1" fill="#8c8c6c"/><rect x="9" y="51" width="1" height="1" fill="#6c6c50"/><rect x="10" y="58" width="1" height="1" fill="#8c8c6c"/><rect x="9" y="59" width="1" height="1" fill="#6c6c50"/><rect x="6" y="46" width="1" height="1" fill="#8c8c6c"/><rect x="5" y="47" width="1" height="1" fill="#6c6c50"/><rect x="6" y="54" width="1" height="1" fill="#8c8c6c"/><rect x="5" y="55" width="1" height="1" fill="#6c6c50"/></svg>
<div style="position:absolute;left:371px;top:383px;width:7px;height:1px;background:#8c8c8c"></div>
<div style="position:absolute;left:371px;top:384px;width:7px;height:1px;background:#f8f8f8"></div>
<div class="t" style="left:385.7px;top:377.88px;font-size:11.6px;color:#000;font-weight:700;letter-spacing:0.25px">Summenzeitreihen</div>
<div style="position:absolute;left:525px;top:383px;width:441px;height:1px;background:#8c8c8c"></div>
<div style="position:absolute;left:525px;top:384px;width:441px;height:1px;background:#f0f0f0"></div>
<div class="t" style="left:371.5px;top:402.38px;font-size:12.9px;color:#000;font-weight:400;">Bilanzierungsgebiet</div>
<div class="t" style="left:496.9px;top:402.38px;font-size:12.9px;color:#000;font-weight:400;">Spannungsebene</div>
<div class="t" style="left:611.4px;top:402.38px;font-size:12.9px;color:#000;font-weight:400;">Typ</div>
<div class="t" style="left:659px;top:402.38px;font-size:12.9px;color:#000;font-weight:400;">MaBiS-Zählpunkt</div>
<div class="t" style="left:813.3px;top:402.38px;font-size:12.9px;color:#000;font-weight:400;">Summe</div>
<div class="fld" style="left:372px;top:417px;width:124px;height:20px;background:#d9d9d9"></div>
<div class="fld" style="left:497px;top:417px;width:113px;height:20px;background:#d9d9d9"></div>
<div class="fld" style="left:611px;top:417px;width:48px;height:20px;background:#d9d9d9"></div>
<div class="fld" style="left:660px;top:417px;width:153px;height:20px;background:#d9d9d9"></div>
<div class="fld" style="left:814px;top:417px;width:95px;height:20px;background:#d9d9d9"></div>
<div class="fld" style="left:910px;top:417px;width:42px;height:20px;background:#d9d9d9"></div>
<div class="fld" style="left:372px;top:438px;width:124px;height:20px;background:#fff"></div>
<div class="fld" style="left:497px;top:438px;width:113px;height:20px;background:#fff"></div>
<div class="fld" style="left:611px;top:438px;width:48px;height:20px;background:#fff"></div>
<div class="fld" style="left:660px;top:438px;width:153px;height:20px;background:#fff"></div>
<div class="fld" style="left:814px;top:438px;width:95px;height:20px;background:#fff"></div>
<div class="fld" style="left:910px;top:438px;width:42px;height:20px;background:#fff"></div>
<div class="fld" style="left:372px;top:459px;width:124px;height:20px;background:#fff"></div>
<div class="fld" style="left:497px;top:459px;width:113px;height:20px;background:#fff"></div>
<div class="fld" style="left:611px;top:459px;width:48px;height:20px;background:#fff"></div>
<div class="fld" style="left:660px;top:459px;width:153px;height:20px;background:#fff"></div>
<div class="fld" style="left:814px;top:459px;width:95px;height:20px;background:#fff"></div>
<div class="fld" style="left:910px;top:459px;width:42px;height:20px;background:#fff"></div>
<div class="fld" style="left:372px;top:480px;width:124px;height:20px;background:#fff"></div>
<div class="fld" style="left:497px;top:480px;width:113px;height:20px;background:#fff"></div>
<div class="fld" style="left:611px;top:480px;width:48px;height:20px;background:#fff"></div>
<div class="fld" style="left:660px;top:480px;width:153px;height:20px;background:#fff"></div>
<div class="fld" style="left:814px;top:480px;width:95px;height:20px;background:#fff"></div>
<div class="fld" style="left:910px;top:480px;width:42px;height:20px;background:#fff"></div>
<div class="fld" style="left:372px;top:501px;width:124px;height:20px;background:#fff"></div>
<div class="fld" style="left:497px;top:501px;width:113px;height:20px;background:#fff"></div>
<div class="fld" style="left:611px;top:501px;width:48px;height:20px;background:#fff"></div>
<div class="fld" style="left:660px;top:501px;width:153px;height:20px;background:#fff"></div>
<div class="fld" style="left:814px;top:501px;width:95px;height:20px;background:#fff"></div>
<div class="fld" style="left:910px;top:501px;width:42px;height:20px;background:#fff"></div>
<div class="fld" style="left:372px;top:522px;width:124px;height:20px;background:#fff"></div>
<div class="fld" style="left:497px;top:522px;width:113px;height:20px;background:#fff"></div>
<div class="fld" style="left:611px;top:522px;width:48px;height:20px;background:#fff"></div>
<div class="fld" style="left:660px;top:522px;width:153px;height:20px;background:#fff"></div>
<div class="fld" style="left:814px;top:522px;width:95px;height:20px;background:#fff"></div>
<div class="fld" style="left:910px;top:522px;width:42px;height:20px;background:#fff"></div>
<div class="fld" style="left:372px;top:543px;width:124px;height:20px;background:#fff"></div>
<div class="fld" style="left:497px;top:543px;width:113px;height:20px;background:#fff"></div>
<div class="fld" style="left:611px;top:543px;width:48px;height:20px;background:#fff"></div>
<div class="fld" style="left:660px;top:543px;width:153px;height:20px;background:#fff"></div>
<div class="fld" style="left:814px;top:543px;width:95px;height:20px;background:#fff"></div>
<div class="fld" style="left:910px;top:543px;width:42px;height:20px;background:#fff"></div>
<div class="t" style="left:374.5px;top:422.38px;width:119px;font-size:12.9px;overflow:hidden">Stadtwerke Ilmenau Stadtwerke</div>
<div class="t" style="left:499.5px;top:422.38px;width:108px;font-size:12.9px;overflow:hidden">NS Niederspannung</div>
<div class="t" style="left:613.5px;top:422.38px;width:43px;font-size:12.9px;overflow:hidden">LGS</div>
<div class="t" style="left:662.5px;top:422.72px;width:148px;font-size:12.5px;overflow:hidden">9911845000009000926ZN</div>
<div class="t" style="left:814px;top:422.38px;width:92.5px;text-align:right;font-size:12.9px;overflow:hidden">61.946,952</div>
<div class="t" style="left:912.5px;top:422.38px;width:37px;font-size:12.9px;overflow:hidden">kWh</div>
<div class="t" style="left:374.5px;top:443.38px;width:119px;font-size:12.9px;overflow:hidden">Stadtwerke Ilmenau Stadtwerke</div>
<div class="t" style="left:499.5px;top:443.38px;width:108px;font-size:12.9px;overflow:hidden">NS Niederspannung</div>
<div class="t" style="left:613.5px;top:443.38px;width:43px;font-size:12.9px;overflow:hidden">SLS</div>
<div class="t" style="left:662.5px;top:443.72px;width:148px;font-size:12.5px;overflow:hidden">9911845000009000926ZN</div>
<div class="t" style="left:814px;top:443.38px;width:92.5px;text-align:right;font-size:12.9px;overflow:hidden">5.762,400</div>
<div class="t" style="left:912.5px;top:443.38px;width:37px;font-size:12.9px;overflow:hidden">kWh</div>
<div style="position:absolute;left:952px;top:416px;width:14px;height:147px;box-sizing:border-box;background:#f4f4e6;border:1px solid #dfe0c0;border-radius:7px"></div>
<div style="position:absolute;left:953px;top:417px;width:12px;height:6px;border-top:1px solid #fff;border-radius:6px 6px 0 0;box-sizing:border-box"></div>
<div style="position:absolute;left:952px;top:431px;width:1px;height:118px;background:#8c8cd8"></div>
<div style="position:absolute;left:965px;top:431px;width:1px;height:118px;background:#8c8cd8"></div>
<div style="position:absolute;left:953px;top:430px;width:12px;height:1px;background:#5a5a5a"></div>
<div style="position:absolute;left:953px;top:548px;width:12px;height:1px;background:#a09c80"></div>
<svg style="left:955px;top:422px;" width="8" height="5" viewBox="0 0 8 5" shape-rendering="crispEdges"><polygon points="0,4 3.5,0 7,4" fill="#4a4a4a" shape-rendering="auto"/></svg>
<svg style="left:955px;top:553px;" width="8" height="5" viewBox="0 0 8 5" shape-rendering="crispEdges"><polygon points="0,0 3.5,4 7,0" fill="#4a4a4a" shape-rendering="auto"/></svg>
<svg style="left:952px;top:416px;" width="14" height="147" viewBox="0 0 14 147" shape-rendering="crispEdges"><rect x="11" y="59" width="1" height="1" fill="#8c8c6c"/><rect x="10" y="60" width="1" height="1" fill="#6c6c50"/><rect x="11" y="67" width="1" height="1" fill="#8c8c6c"/><rect x="10" y="68" width="1" height="1" fill="#6c6c50"/><rect x="11" y="75" width="1" height="1" fill="#8c8c6c"/><rect x="10" y="76" width="1" height="1" fill="#6c6c50"/><rect x="11" y="83" width="1" height="1" fill="#8c8c6c"/><rect x="10" y="84" width="1" height="1" fill="#6c6c50"/><rect x="7" y="63" width="1" height="1" fill="#8c8c6c"/><rect x="6" y="64" width="1" height="1" fill="#6c6c50"/><rect x="7" y="71" width="1" height="1" fill="#8c8c6c"/><rect x="6" y="72" width="1" height="1" fill="#6c6c50"/><rect x="7" y="79" width="1" height="1" fill="#8c8c6c"/><rect x="6" y="80" width="1" height="1" fill="#6c6c50"/></svg>
<div class="btn" style="left:727px;top:584px;width:113px;height:19px"></div>
<div class="t" style="left:737px;top:588.69px;font-size:11px;color:#000;font-weight:400;">Zeitreihenwerte &gt;&gt;</div>
<div class="btn" style="left:852px;top:584px;width:113px;height:19px"></div>
<div class="t" style="left:870px;top:588.73px;font-size:10.95px;color:#000;font-weight:400;">Visualisieren &gt;&gt;</div>
<svg style="left:0;top:0" width="1001" height="632"><path d="M367 444 C372.5 444.03 388.8 444.07 400 444.2 C411.2 444.33 423.7 444.42 434 444.8 C444.3 445.18 451.0 445.80 462 446.5 C473.0 447.20 488.7 448.42 500 449 C511.3 449.58 520.0 449.75 530 450 C540.0 450.25 538.3 450.40 560 450.5 C581.7 450.60 641.7 450.63 660 450.6 C678.3 450.57 666.7 450.48 670 450.3 C673.3 450.12 675.0 449.72 680 449.5 C685.0 449.28 686.7 449.12 700 449 C713.3 448.88 733.3 448.78 760 448.8 C786.7 448.82 836.7 449.23 860 449.1 C883.3 448.97 890.8 448.43 900 448 C909.2 447.57 905.8 446.72 915 446.5 C924.2 446.28 948.3 446.67 955 446.7" fill="none" stroke="#fa5a00" stroke-width="4.6" stroke-linecap="round" stroke-linejoin="round"/></svg>
</body></html>
